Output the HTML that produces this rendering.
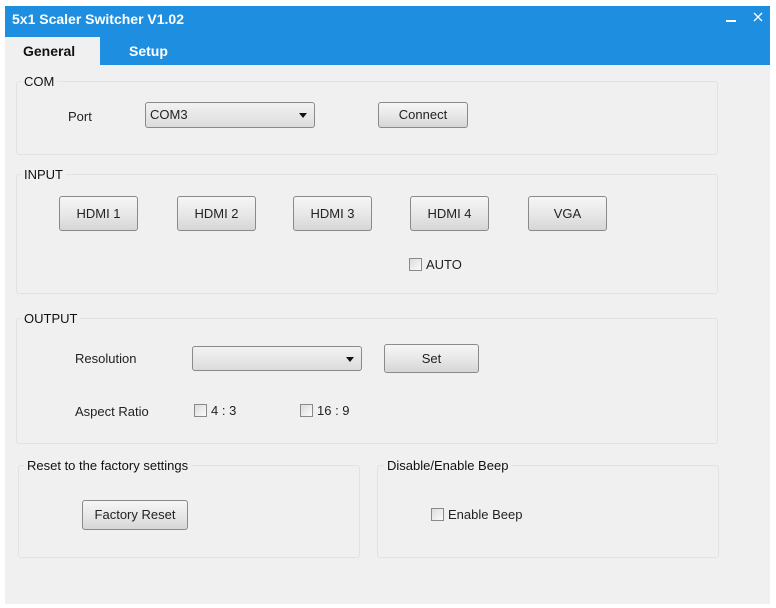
<!DOCTYPE html><html><head><style>
body{margin:0;width:776px;height:608px;background:#fff;position:relative;overflow:hidden;font-family:"Liberation Sans",sans-serif;font-size:13px;color:#222}
.a{position:absolute}
.g{position:absolute;border:1px solid #e2e2e2;border-radius:3px;background:#f0f0f0}
.lb{position:absolute;background:#f0f0f0;padding:0 3px;font-size:13px;color:#111}
.b{position:absolute;border:1px solid #8a8a8a;border-radius:3px;background:linear-gradient(#f6f6f6,#e8e8e8 50%,#d6d6d6);text-align:center;box-sizing:border-box;font-size:13px;color:#222}
.c{position:absolute;border:1px solid #8a8a8a;border-radius:3px;background:linear-gradient(#f2f2f2,#dcdcdc);box-sizing:border-box;font-size:13px;padding-left:4px}
.c:after{content:"";position:absolute;right:7px;top:10px;border:4px solid transparent;border-top:5px solid #111;border-bottom:0}
.k{position:absolute;width:11px;height:11px;border:1px solid #8a8a8a;background:linear-gradient(135deg,#ddd,#fafafa)}
</style></head><body>
<div class="a" style="left:5px;top:6px;width:765px;height:59px;background:#1e8fe0"></div>
<div class="a" style="left:12px;top:11px;color:#fff;font-weight:bold;font-size:14px">5x1 Scaler Switcher V1.02</div>
<div class="a" style="left:726px;top:20px;width:10px;height:2px;background:#fff"></div>
<svg class="a" style="left:753px;top:12px" width="10" height="10"><path d="M1 1L9 9M9 1L1 9" stroke="#fff" stroke-width="1.3"/></svg>
<div class="a" style="left:5px;top:37px;width:95px;height:28px;background:#f0f0f0"></div>
<div class="a" style="left:23px;top:43px;font-weight:bold;font-size:14px;color:#111">General</div>
<div class="a" style="left:129px;top:43px;font-weight:bold;font-size:14px;color:#fff">Setup</div>
<div class="a" style="left:5px;top:65px;width:765px;height:539px;background:#f0f0f0"></div>

<div class="g" style="left:16px;top:81px;width:700px;height:72px"></div><div class="lb" style="left:21px;top:74px">COM</div>
<div class="a" style="left:68px;top:109px">Port</div>
<div class="c" style="left:145px;top:102px;width:170px;height:26px;line-height:24px">COM3</div>
<div class="b" style="left:378px;top:102px;width:90px;height:26px;line-height:24px">Connect</div>

<div class="g" style="left:16px;top:174px;width:700px;height:118px"></div><div class="lb" style="left:21px;top:167px">INPUT</div>
<div class="b" style="left:59px;top:196px;width:79px;height:35px;line-height:33px">HDMI 1</div>
<div class="b" style="left:177px;top:196px;width:79px;height:35px;line-height:33px">HDMI 2</div>
<div class="b" style="left:293px;top:196px;width:79px;height:35px;line-height:33px">HDMI 3</div>
<div class="b" style="left:410px;top:196px;width:79px;height:35px;line-height:33px">HDMI 4</div>
<div class="b" style="left:528px;top:196px;width:79px;height:35px;line-height:33px">VGA</div>
<div class="k" style="left:409px;top:258px"></div><div class="a" style="left:426px;top:257px">AUTO</div>

<div class="g" style="left:16px;top:318px;width:700px;height:124px"></div><div class="lb" style="left:21px;top:311px">OUTPUT</div>
<div class="a" style="left:75px;top:351px">Resolution</div>
<div class="c" style="left:192px;top:346px;width:170px;height:25px"></div>
<div class="b" style="left:384px;top:344px;width:95px;height:29px;line-height:27px">Set</div>
<div class="a" style="left:75px;top:404px">Aspect Ratio</div>
<div class="k" style="left:194px;top:404px"></div><div class="a" style="left:211px;top:403px">4 : 3</div>
<div class="k" style="left:300px;top:404px"></div><div class="a" style="left:317px;top:403px">16 : 9</div>

<div class="g" style="left:18px;top:465px;width:340px;height:91px"></div><div class="lb" style="left:24px;top:458px">Reset to the factory settings</div>
<div class="b" style="left:82px;top:500px;width:106px;height:30px;line-height:28px">Factory Reset</div>
<div class="g" style="left:377px;top:465px;width:340px;height:91px"></div><div class="lb" style="left:384px;top:458px">Disable/Enable Beep</div>
<div class="k" style="left:431px;top:508px"></div><div class="a" style="left:448px;top:507px">Enable Beep</div>
</body></html>
